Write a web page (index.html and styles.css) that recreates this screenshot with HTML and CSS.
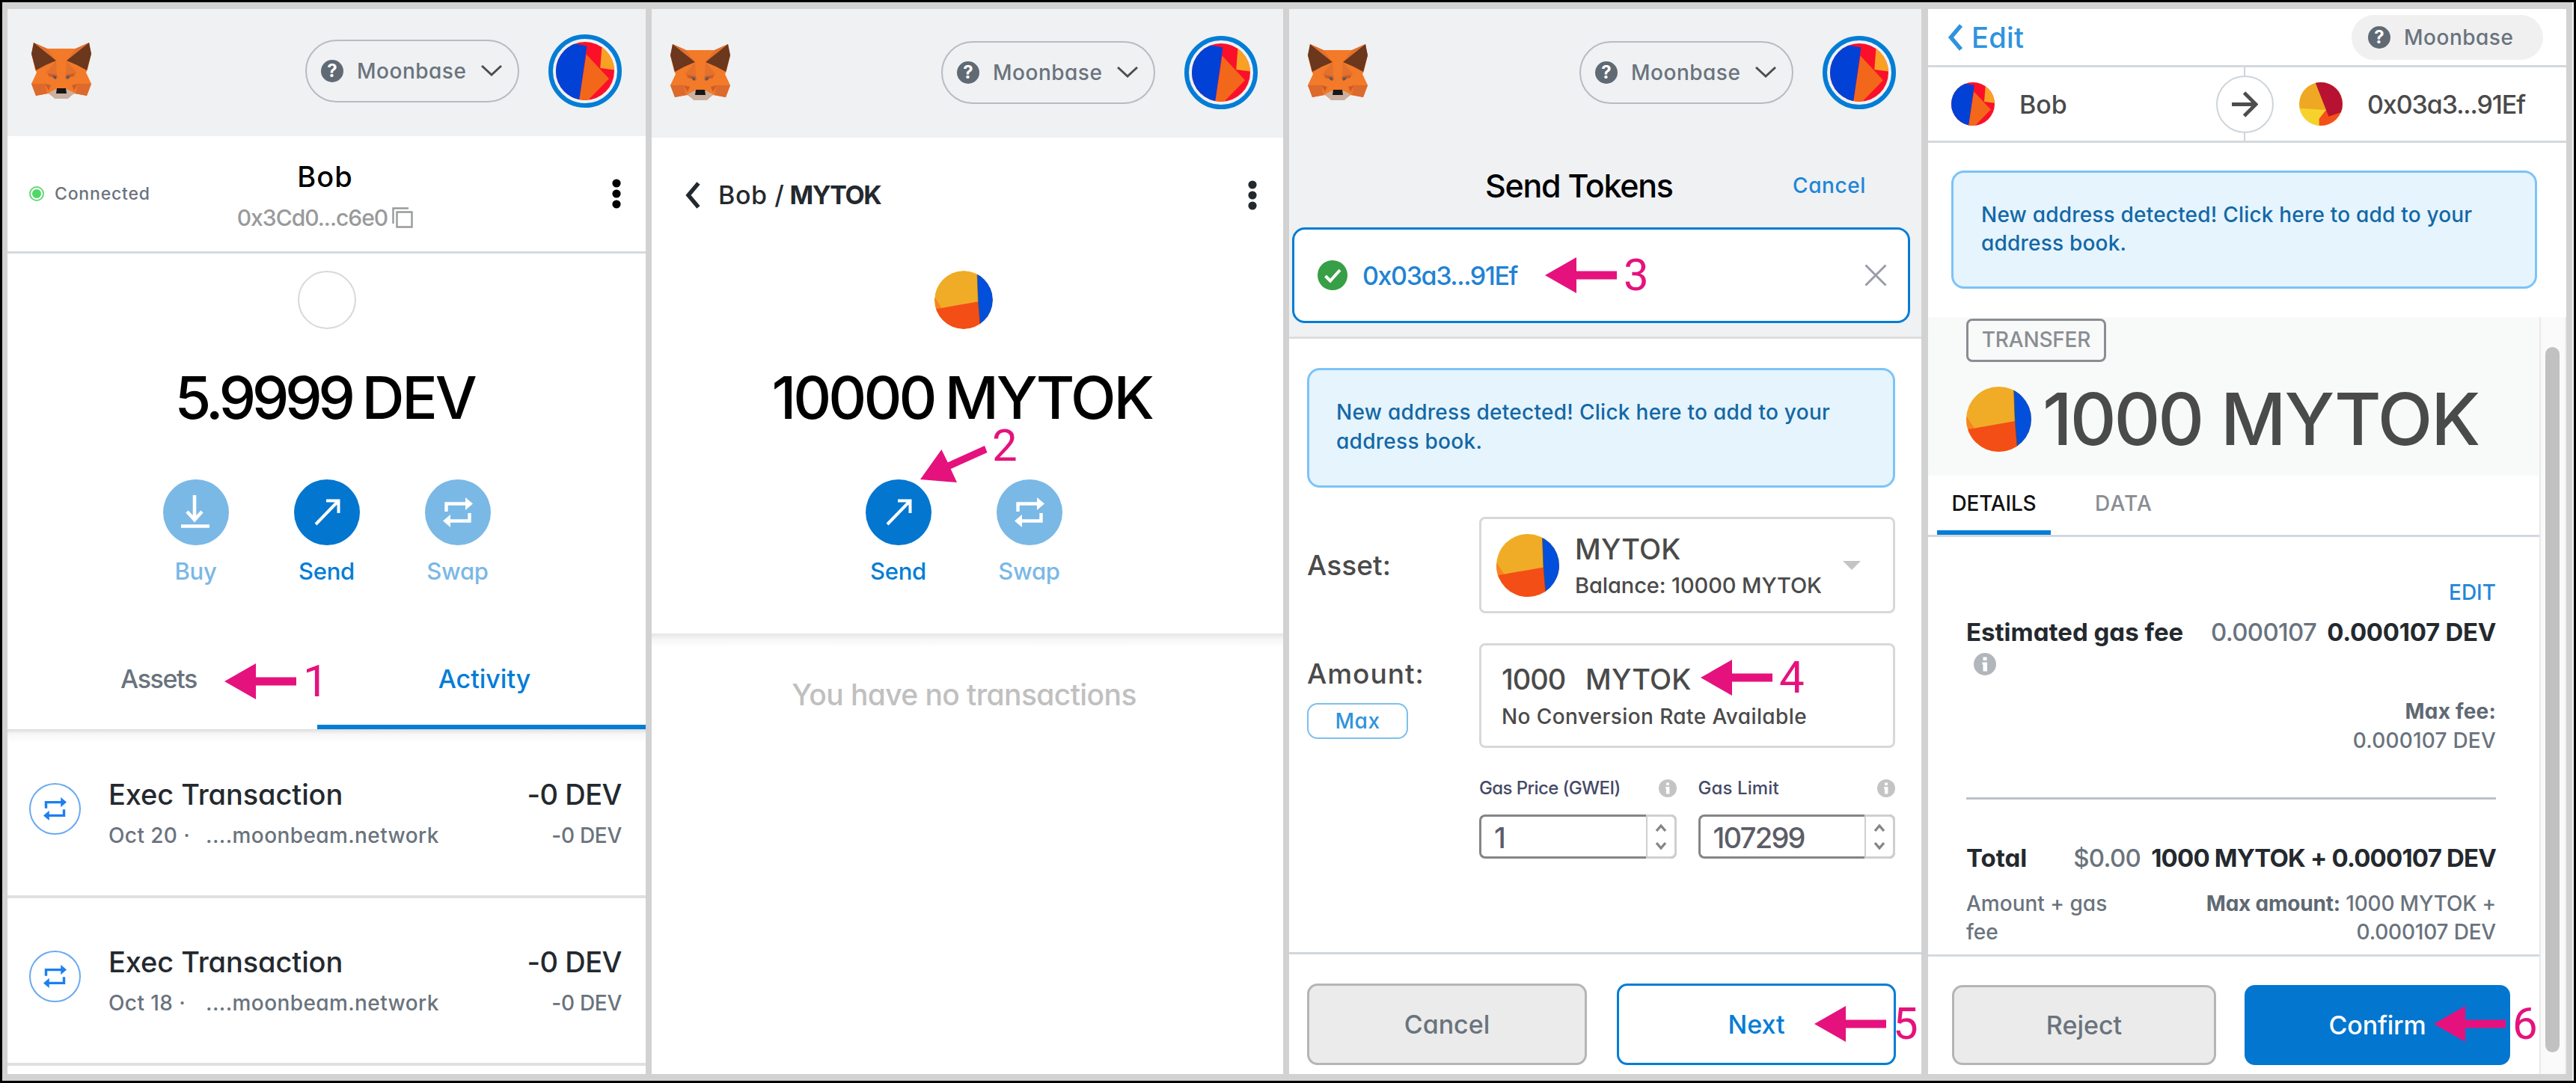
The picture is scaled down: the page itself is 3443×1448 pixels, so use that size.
FILE: index.html
```html
<!DOCTYPE html>
<html lang="en">
<head>
<meta charset="utf-8">
<title>Send tokens walkthrough</title>
<link rel="stylesheet" href="styles.css">
</head>
<body>
<svg class="defs" aria-hidden="true">
  <symbol id="fox" viewBox="0 0 80 76">
    <path fill="#f27a28" d="M3 0l18 8h38l18-8 3 15-5 21-2 4 7 15-6 16-17-3-8 6H31l-8-6-17 3-6-16 7-15-2-4-5-21z"/>
    <path fill="#e2702e" d="M33 24L19 41l15 2zM47 24l14 17-15 2zM3 0l18 8 11 15zM77 0L59 8 48 23z"/>
    <path fill="#dc6a2c" d="M0 55h18l3 13-15 3zM80 55H62l-3 13 15 3z"/>
    <path fill="#cd5c2b" d="M18 55l8 2-3 7zM62 55l-8 2 3 7zM22 41l12 2 1 5-12-3zM58 41l-12 2-1 5 12-3z"/>
    <path fill="#575a5e" d="M28 44l5 1v4l-3-1zM52 44l-5 1v4l3-1z"/>
    <path fill="#6b371d" d="M3 0l30 24-14 6-13 7-6-22zM77 0L47 24l14 6 13 7 6-22z"/>
    <path fill="#cbb0a0" d="M23 67l10-5h14l10 5-8 8H31z"/>
    <path fill="#161616" d="M34 61h12l1 7H33z"/>
  </symbol>
  <symbol id="face-bob" viewBox="0 0 100 100">
    <g clip-path="url(#round)">
      <path fill="#fb1029" d="M0 0h100v100H0z"/>
      <path fill="#0141d6" d="M0 0l25 2 28 5-13 93H0z"/>
      <path fill="#f3671b" d="M52 21l39 42-36 37H40z"/>
      <path fill="#f9a124" d="M79 5h21v43l-24-3z"/>
    </g>
  </symbol>
  <symbol id="face-token" viewBox="0 0 100 100">
    <g clip-path="url(#round)">
      <path fill="#f0ac26" d="M0 0h100v100H0z"/>
      <path fill="#f7851f" d="M0 45l12 18-12 10z"/>
      <path fill="#f44e17" d="M0 66l75-13 6 47H0z"/>
      <path fill="#024fdb" stroke="#5a4a3a" stroke-width=".8" d="M73 0l2 53 4 47h22V0z"/>
    </g>
  </symbol>
  <symbol id="face-recipient" viewBox="0 0 100 100">
    <g clip-path="url(#round)">
      <path fill="#efa823" d="M0 0h100v100H0z"/>
      <path fill="#f5d32c" d="M0 60l62 4-14 20v16H0z"/>
      <path fill="#f4501a" d="M62 64l-16 20v16h54V60z"/>
      <path fill="#b81232" d="M37 0h63v68l-32 11z"/>
    </g>
  </symbol>
  <clipPath id="round"><circle cx="50" cy="50" r="50"/></clipPath>
  <symbol id="copy" viewBox="0 0 28 28"><path fill="none" stroke="#989a9b" stroke-width="2.4" d="M1.5 22V1.5H22M6.500 6.500H26.500V26.500H6.500z"/></symbol>
  <symbol id="chevron-down" viewBox="0 0 28 18"><path fill="none" stroke="#4d4d4d" stroke-width="3" d="M1 2l13 12L27 2"/></symbol>
  <symbol id="chevron-left" viewBox="0 0 20 36"><path fill="none" stroke="currentColor" stroke-width="5.500" d="M17.500 2L4 18l13.500 16"/></symbol>
  <symbol id="kebab" viewBox="0 0 12 40"><circle cx="6" cy="6" r="5.600"/><circle cx="6" cy="20" r="5.600"/><circle cx="6" cy="34" r="5.600"/></symbol>
  <symbol id="download" viewBox="0 0 44 48"><path fill="none" stroke="#fff" stroke-width="4.600" d="M20 1v32M10 23l10 11 10-11M2 42.500h38"/></symbol>
  <symbol id="send" viewBox="0 0 40 40"><path fill="none" stroke="#fff" stroke-width="4" d="M5 36L35 5M19 4.500h16.500V21"/></symbol>
  <symbol id="swap" viewBox="0 0 40 40"><path fill="none" stroke="currentColor" stroke-width="4.400" d="M4.500 19V8.500H31M35.500 21v10.500H9"/><path fill="currentColor" d="M30 0l10 8.500-10 8.500zM10 23L0 31.500 10 40z"/></symbol>
  <symbol id="info" viewBox="0 0 30 30"><circle cx="15" cy="15" r="15" fill="currentColor"/><path fill="#fff" d="M12.500 5.500h5v4.500h-5zM11.500 12.500h6.500v12h-5.500v-9h-1z"/></symbol>
  <symbol id="arrow" viewBox="0 0 96 48"><path fill="#e5127d" d="M0 24L42 0v18.500h54v11H42V48z"/></symbol>
  <symbol id="stepper" viewBox="0 0 16 36"><path fill="none" stroke="#858585" stroke-width="3.400" d="M2 10l6-7 6 7M2 26l6 7 6-7"/></symbol>
</svg>

<main class="board">

  <section class="panel account">
    <header class="topbar">
      <svg class="fox"><use href="#fox"/></svg>
      <div class="network"><span class="help">?</span><span class="network-name">Moonbase</span><svg class="network-caret"><use href="#chevron-down"/></svg></div>
      <div class="avatar-ring"><svg><use href="#face-bob"/></svg></div>
    </header>
    <div class="identity">
      <div class="connected"><i class="status-dot"></i><span>Connected</span></div>
      <div class="who">
        <div class="who-name">Bob</div>
        <div class="who-address"><span>0x3Cd0...c6e0</span><svg><use href="#copy"/></svg></div>
      </div>
      <svg class="kebab"><use href="#kebab"/></svg>
    </div>
    <div class="overview">
      <div class="coin-blank"></div>
      <div class="balance"><span class="digits-native">5.9999</span><span class="unit-dev">DEV</span></div>
      <div class="actions">
        <div class="action dim"><span class="action-disc"><svg class="glyph-buy"><use href="#download"/></svg></span>Buy</div>
        <div class="action"><span class="action-disc"><svg class="glyph-send"><use href="#send"/></svg></span>Send</div>
        <div class="action dim"><span class="action-disc"><svg class="glyph-swap"><use href="#swap"/></svg></span>Swap</div>
      </div>
    </div>
    <nav class="tabs">
      <span class="tab tab-assets">Assets</span>
      <span class="tab tab-activity">Activity</span>
    </nav>
    <div class="history">
      <article class="tx">
        <span class="tx-icon"><svg><use href="#swap"/></svg></span>
        <div class="tx-main"><div class="tx-title">Exec Transaction</div><div class="tx-sub"><span class="tx-date">Oct 20 ·</span><span>....moonbeam.network</span></div></div>
        <div class="tx-amount"><div class="tx-value">-0 DEV</div><div class="tx-fiat">-0 DEV</div></div>
      </article>
      <article class="tx">
        <span class="tx-icon"><svg><use href="#swap"/></svg></span>
        <div class="tx-main"><div class="tx-title">Exec Transaction</div><div class="tx-sub"><span class="tx-date">Oct 18 ·</span><span>....moonbeam.network</span></div></div>
        <div class="tx-amount"><div class="tx-value">-0 DEV</div><div class="tx-fiat">-0 DEV</div></div>
      </article>
    </div>
    <div class="callout step-1"><svg><use href="#arrow"/></svg>1</div>
  </section>

  <section class="panel token">
    <header class="topbar">
      <svg class="fox"><use href="#fox"/></svg>
      <div class="network"><span class="help">?</span><span class="network-name">Moonbase</span><svg class="network-caret"><use href="#chevron-down"/></svg></div>
      <div class="avatar-ring"><svg><use href="#face-bob"/></svg></div>
    </header>
    <div class="crumbs">
      <svg class="crumb-back"><use href="#chevron-left"/></svg>
      <span class="crumb-account">Bob /</span><b class="crumb-token">MYTOK</b>
      <svg class="kebab"><use href="#kebab"/></svg>
    </div>
    <div class="overview">
      <svg class="coin"><use href="#face-token"/></svg>
      <div class="balance"><span class="digits-token">10000</span><span class="unit-token">MYTOK</span></div>
      <div class="actions">
        <div class="action"><span class="action-disc"><svg class="glyph-send"><use href="#send"/></svg></span>Send</div>
        <div class="action dim"><span class="action-disc"><svg class="glyph-swap"><use href="#swap"/></svg></span>Swap</div>
      </div>
    </div>
    <div class="empty">You have no transactions</div>
    <svg class="step-2-arrow" viewBox="0 0 90 50"><path fill="#e5127d" d="M0 45L28.400 5l8.400 17.300L86 0l3.500 9-48.800 22 8.300 18z"/></svg>
    <div class="callout step-2">2</div>
  </section>

  <section class="panel send">
    <div class="send-head">
      <header class="topbar">
        <svg class="fox"><use href="#fox"/></svg>
        <div class="network"><span class="help">?</span><span class="network-name">Moonbase</span><svg class="network-caret"><use href="#chevron-down"/></svg></div>
        <div class="avatar-ring"><svg><use href="#face-bob"/></svg></div>
      </header>
      <div class="send-title"><h1>Send Tokens</h1><a>Cancel</a></div>
      <div class="recipient">
        <svg class="check" viewBox="0 0 40 40"><circle cx="20" cy="20" r="20" fill="#379f46"/><path fill="none" stroke="#fff" stroke-width="4" d="M10.500 21l6.500 6.500L30 13"/></svg>
        <span class="recipient-address">0x03a3...91Ef</span>
        <svg class="clear" viewBox="0 0 30 30"><path stroke="#9a9ca8" stroke-width="3" d="M1.500 1.500l27 27M28.500 1.500l-27 27"/></svg>
      </div>
    </div>
    <p class="notice">New address detected! Click here to add to your<br>address book.</p>
    <div class="form">
      <label class="form-label label-asset">Asset:</label>
      <div class="asset-box">
        <svg class="asset-coin"><use href="#face-token"/></svg>
        <div><div class="asset-name">MYTOK</div><div class="asset-balance">Balance: 10000 MYTOK</div></div>
        <i class="dropdown"></i>
      </div>
      <div class="amount-side"><label class="form-label label-amount">Amount:</label><button class="max">Max</button></div>
      <div class="amount-box">
        <div class="amount-line"><span class="amount-digits">1000</span><span>MYTOK</span></div>
        <div class="amount-note">No Conversion Rate Available</div>
      </div>
      <div class="gas">
        <div class="gas-field">
          <div class="gas-label"><span class="gas-price">Gas Price (GWEI)</span><svg><use href="#info"/></svg></div>
          <div class="gas-input"><span class="gas-value">1</span><span class="gas-stepper"><svg><use href="#stepper"/></svg></span></div>
        </div>
        <div class="gas-field">
          <div class="gas-label"><span class="gas-limit">Gas Limit</span><svg><use href="#info"/></svg></div>
          <div class="gas-input"><span class="gas-value">107299</span><span class="gas-stepper"><svg><use href="#stepper"/></svg></span></div>
        </div>
      </div>
    </div>
    <footer class="send-foot"><button class="btn btn-grey">Cancel</button><button class="btn btn-outline">Next</button></footer>
    <div class="callout step-3"><svg><use href="#arrow"/></svg>3</div>
    <div class="callout step-4"><svg><use href="#arrow"/></svg>4</div>
    <div class="callout step-5"><svg><use href="#arrow"/></svg>5</div>
  </section>

  <section class="panel confirm">
    <div class="edit-row">
      <a class="edit-link"><svg><use href="#chevron-left"/></svg>Edit</a>
      <div class="network-flat"><span class="help">?</span><span class="network-name">Moonbase</span></div>
    </div>
    <div class="parties">
      <div class="party from"><svg class="party-face"><use href="#face-bob"/></svg><span class="party-bob">Bob</span></div>
      <div class="party to"><svg class="party-face"><use href="#face-recipient"/></svg><span class="party-address">0x03a3...91Ef</span></div>
      <span class="party-arrow"><svg viewBox="0 0 36 36"><path fill="none" stroke="#4d4d4d" stroke-width="5" d="M0 18h32M17 2l16 16-16 16"/></svg></span>
    </div>
    <p class="notice">New address detected! Click here to add to your<br>address book.</p>
    <div class="scroller">
      <div class="scroll-main">
        <div class="hero">
          <span class="badge">TRANSFER</span>
          <div class="hero-amount"><svg><use href="#face-token"/></svg><span class="hero-digits">1000</span><span class="hero-unit">MYTOK</span></div>
        </div>
        <nav class="detail-tabs"><span class="detail-tab current">DETAILS</span><span class="detail-tab">DATA</span></nav>
        <div class="details">
          <div class="details-edit">EDIT</div>
          <div class="line"><b class="line-name">Estimated gas fee</b><span class="line-value"><span class="faint">0.000107</span><b>0.000107 DEV</b></span></div>
          <svg class="details-info"><use href="#info"/></svg>
          <div class="max-fee"><b>Max fee:</b><br>0.000107 DEV</div>
          <hr>
          <div class="line total"><b class="line-name">Total</b><span class="line-value"><span class="faint">$0.00</span><b class="total-sum">1000 MYTOK + 0.000107 DEV</b></span></div>
          <div class="notes"><span>Amount + gas<br>fee</span><span class="notes-right"><b>Max amount:</b> 1000 MYTOK +<br>0.000107 DEV</span></div>
        </div>
        <footer class="confirm-foot"><button class="btn btn-grey">Reject</button><button class="btn btn-solid">Confirm</button></footer>
      </div>
      <div class="scrollbar"><i class="thumb"></i></div>
    </div>
    <div class="callout step-6"><svg><use href="#arrow"/></svg>6</div>
  </section>

</main>
</body>
</html>
```
FILE: styles.css
```css
* { box-sizing: border-box; }
body {
  margin: 0;
  width: 3443px;
  height: 1448px;
  padding: 3px;
  background: #000;
  overflow: hidden;
  font-family: Inter, "Liberation Sans", sans-serif;
  font-weight: 450;
  font-feature-settings: "cv11";
  color: #24292e;
}
svg { display: block; flex: none; }
.defs { position: absolute; width: 0; height: 0; }
h1, p { margin: 0; font-weight: 500; }
button { font: inherit; padding: 0; }

.board {
  height: 1442px;
  width: 3437px;
  padding: 9px 0 0 7px;
  background: #d2d2d2;
  border-right: 2px solid #f4f4f4;
  display: grid;
  grid-template-columns: 853px 844px 846px 853px;
  grid-template-rows: 1424px;
  column-gap: 8px;
}
.panel { position: relative; display: flex; flex-direction: column; background: #fff; }
.send { width: 845px; }

/* Top bar */
.topbar {
  flex: none;
  height: 172px;
  padding: 0 34px 3px 25px;
  display: flex;
  align-items: center;
  background: #eff1f3;
}
.account .topbar { height: 170px; padding: 0 32px 5px; }
.fox { width: 80px; height: 76px; }
.network {
  width: 286px;
  height: 84px;
  margin-left: auto;
  margin-right: 39px;
  padding-left: 19px;
  border: 2px solid #b6bcc2;
  border-radius: 42px;
  display: flex;
  align-items: center;
}
.help {
  width: 30px;
  height: 30px;
  margin-right: 18px;
  border-radius: 50%;
  background: #606a74;
  color: #fff;
  font-size: 24px;
  font-weight: 700;
  line-height: 30px;
  text-align: center;
}
.network-name { font-size: 28px; font-weight: 500; letter-spacing: .5px; color: #6a737d; line-height: 40px; }
.network-caret { width: 28px; height: 18px; margin-left: 20px; }
.avatar-ring {
  width: 98px;
  height: 98px;
  border: 6px solid #037dd6;
  border-radius: 50%;
  display: grid;
  place-items: center;
}
.avatar-ring svg { width: 78px; height: 78px; }
.kebab { width: 12px; height: 40px; }

/* Account panel */
.identity {
  height: 157px;
  padding: 0 33px 0 29px;
  border-bottom: 3px solid #d6dadf;
  display: grid;
  grid-template-columns: 1fr auto 1fr;
  align-items: center;
}
.identity .kebab { justify-self: end; fill: #000; }
.connected { display: flex; align-items: center; gap: 14px; font-size: 23px; font-weight: 500; letter-spacing: .8px; color: #6a737d; }
.status-dot { width: 20px; height: 20px; border: 2px solid #6bd47c; border-radius: 50%; padding: 2px; background: #4cd964 content-box; background-clip: content-box; }
.who { padding-top: 9px; line-height: 55px; text-align: center; }
.who-name { font-size: 38px; font-weight: 500; letter-spacing: 1px; color: #000; }
.who-address { display: flex; align-items: center; gap: 6px; font-size: 30px; letter-spacing: -1px; color: #989a9b; }
.who-address svg { width: 28px; height: 28px; }

.overview { display: flex; flex-direction: column; align-items: center; }
.account .overview { padding-top: 23px; }
.coin-blank, .coin { width: 78px; height: 78px; border-radius: 50%; }
.coin-blank { border: 2px solid #d8d8d8; }
.balance { margin: 41px 5px 0 0; display: flex; gap: 14px; font-size: 79px; font-weight: 500; line-height: 100px; color: #000; }
.digits-native { letter-spacing: -5.500px; }
.unit-dev { letter-spacing: -3.200px; }
.digits-token { letter-spacing: -3.900px; }
.unit-token { letter-spacing: -3.100px; }
.actions { margin-top: 60px; display: flex; gap: 87px; }
.action {
  width: 88px;
  display: flex;
  flex-direction: column;
  align-items: center;
  gap: 15px;
  font-size: 31px;
  font-weight: 500;
  letter-spacing: -.3px;
  line-height: 40px;
  color: #037dd6;
}
.action-disc { width: 88px; height: 88px; border-radius: 50%; background: #0376d0; display: grid; place-items: center; }
.dim { color: #7ab8e6; }
.dim .action-disc { background: #7ab8e6; color: #fff; }
.glyph-buy { width: 44px; height: 48px; }
.glyph-send { width: 40px; height: 40px; }
.glyph-swap { width: 40px; height: 40px; }

.tabs {
  margin-top: 59px;
  height: 132px;
  display: grid;
  grid-template-columns: 414px 439px;
  font-size: 34px;
  text-align: center;
  line-height: 122px;
}
.tab { font-weight: 500; padding-top: 4px; }
.tab-assets { padding-right: 10px; color: #6a737d; letter-spacing: -1.400px; }
.tab-activity { padding-left: 8px; color: #037dd6; border-bottom: 6px solid #037dd6; }
.history { padding-top: 2px; background: linear-gradient(#dcdcdc, #f6f6f6 6px, #fff 18px); }
.tx {
  height: 224px;
  padding: 60px 32px 0 29px;
  border-bottom: 4px solid #e0e0e0;
  display: flex;
}
.tx-icon { width: 69px; height: 69px; margin: 10px 37px 0 0; border: 2px solid #6aa9f2; border-radius: 50%; color: #1c7ff0; display: grid; place-items: center; }
.tx-icon svg { width: 31px; height: 31px; }
.tx-title, .tx-value { font-size: 38px; line-height: 50px; letter-spacing: -.1px; }
.tx-sub, .tx-fiat { margin-top: 10px; font-size: 28px; line-height: 40px; color: #6a737d; }
.tx-sub { display: flex; letter-spacing: .4px; }
.tx-date { width: 130px; }
.tx-amount { margin-left: auto; text-align: right; }
.tx-value { letter-spacing: -.5px; }
.tx-fiat { letter-spacing: -.3px; }

/* Token panel */
.crumbs { height: 153px; padding: 0 35px 0 45px; display: flex; align-items: center; font-size: 34px; }
.crumb-back { width: 20px; height: 36px; margin-right: 24px; }
.crumb-account { letter-spacing: .6px; margin-right: 7px; }
.crumb-token { letter-spacing: -1.500px; }
.crumbs .kebab { margin-left: auto; fill: #24292e; }
.token .overview { padding: 25px 10px 63px 0; }
.empty {
  flex: 1;
  padding: 57px 9px 0 0;
  background: linear-gradient(#e6e6e6, #f6f6f6 8px, #fff 18px);
  font-size: 39px;
  line-height: 50px;
  letter-spacing: -.6px;
  text-align: center;
  color: #c0c0c0;
}

/* Send panel */
.send-head { flex: none; height: 441px; background: #eff1f3; border-bottom: 3px solid #dcdee0; }
.send-title { height: 120px; padding: 7px 74px 0 262px; display: flex; align-items: center; justify-content: space-between; }
.send-title h1 { font-size: 43px; letter-spacing: -1.300px; color: #000; }
.send-title a { font-size: 28px; font-weight: 500; letter-spacing: .6px; color: #1e86d6; }
.recipient {
  height: 128px;
  margin: 0 15px 0 4px;
  padding: 0 28px 0 31px;
  border: 3px solid #037dd6;
  border-radius: 17px;
  background: #fff;
  display: flex;
  align-items: center;
}
.check { width: 40px; height: 40px; }
.recipient-address { margin-left: 20px; font-size: 34px; font-weight: 500; letter-spacing: -1.400px; color: #1f83d3; }
.clear { width: 30px; height: 30px; margin-left: auto; }
.notice {
  flex: none;
  height: 160px;
  margin: 39px 35px 0 24px;
  padding: 37px 0 0 36px;
  border: 3px solid #7cc3f8;
  border-radius: 17px;
  background: #e6f4fd;
  font-size: 28px;
  line-height: 38.600px;
  letter-spacing: .28px;
  white-space: nowrap;
  color: #1368a6;
}
.form {
  margin: 39px 35px 0 24px;
  display: grid;
  grid-template-columns: 230px 1fr;
  row-gap: 40px;
}
.form-label { font-size: 37px; line-height: 46px; color: #4a4a4a; }
.label-asset { align-self: center; letter-spacing: .1px; }
.label-amount { letter-spacing: 1px; }
.asset-box, .amount-box { border: 3px solid #d8d8d8; border-radius: 8px; color: #4a4a4a; }
.asset-box { height: 129px; padding: 0 43px 0 20px; display: flex; align-items: center; }
.asset-coin { width: 84px; height: 84px; margin-right: 21px; }
.asset-name { font-size: 38px; line-height: 54px; letter-spacing: .2px; }
.asset-balance { font-size: 29px; line-height: 44px; letter-spacing: -.1px; }
.dropdown { margin-left: auto; border: 12px solid transparent; border-top-color: #c4c4c4; border-bottom: 0; }
.amount-side { padding-top: 18px; display: flex; flex-direction: column; align-items: flex-start; }
.max {
  width: 135px;
  height: 48px;
  margin-top: 16px;
  border: 2px solid #7cc0ee;
  border-radius: 14px;
  background: #fff;
  font-size: 28px;
  font-weight: 500;
  letter-spacing: .5px;
  color: #2f93dc;
}
.amount-box { height: 140px; padding: 20px 0 0 27px; }
.amount-line { display: flex; font-size: 38px; line-height: 50px; letter-spacing: .2px; }
.amount-digits { width: 112px; letter-spacing: -1px; }
.amount-note { margin-top: 3px; font-size: 28px; line-height: 44px; letter-spacing: .4px; }
.gas { grid-column: 2; display: grid; grid-template-columns: 1fr 1fr; column-gap: 29px; }
.gas-label { height: 27px; display: flex; align-items: center; justify-content: space-between; font-size: 24px; color: #454a66; }
.gas-label svg { width: 24px; height: 24px; color: #c4c4c4; }
.gas-price { letter-spacing: -.6px; }
.gas-limit { letter-spacing: .1px; }
.gas-input {
  height: 59px;
  margin-top: 22px;
  border: 3px solid #858585;
  border-right: 0;
  border-radius: 8px;
  display: flex;
  justify-content: space-between;
  font-size: 38px;
  line-height: 57px;
  letter-spacing: -1.700px;
  color: #5b5d67;
}
.gas-value { padding-left: 17px; }
.gas-stepper { width: 41px; margin: -3px 0; border: 3px solid #cfcfcf; border-left-width: 2px; border-radius: 0 8px 8px 0; background: #fff; display: grid; place-items: center; }
.gas-stepper svg { width: 16px; height: 36px; }

.btn { border-radius: 14px; font-size: 34px; font-weight: 500; line-height: 1; }
.btn-grey { border: 3px solid #b5b5b5; background: #ebebeb; color: #6a737d; }
.btn-outline { border: 3px solid #037dd6; background: #fff; color: #037dd6; }
.btn-solid { border: 0; background: #0376d0; color: #fff; letter-spacing: -.2px; }
.send-foot {
  flex: none;
  height: 163px;
  margin-top: auto;
  padding: 39px 34px 13px 24px;
  border-top: 3px solid #d0d6db;
  display: grid;
  grid-template-columns: 374px 373px;
  grid-template-rows: 109px;
  justify-content: space-between;
}

/* Confirm panel */
.edit-row { height: 78px; padding: 0 31px 0 26px; border-bottom: 3px solid #d3d9de; display: flex; align-items: center; justify-content: space-between; }
.edit-link { display: flex; align-items: center; gap: 11px; font-size: 38px; letter-spacing: .3px; color: #2f93de; }
.edit-link svg { width: 21px; height: 36px; }
.network-flat { width: 256px; height: 60px; padding-left: 22px; border-radius: 30px; background: #f0f0f0; display: flex; align-items: center; }
.parties { position: relative; height: 101px; border-bottom: 3px solid #d3d9de; display: grid; grid-template-columns: 422px 1fr; }
.party { padding-left: 31px; display: flex; align-items: center; gap: 33px; font-size: 34px; color: #4a4a4a; }
.party.to { padding-left: 72px; border-left: 2px solid #cdd5da; }
.party-face { width: 58px; height: 58px; }
.party-bob { font-weight: 500; }
.party-address { letter-spacing: -1.100px; }
.party-arrow { position: absolute; left: 385px; top: 11px; width: 77px; height: 77px; border: 2px solid #cdd5da; border-radius: 50%; background: #fff; display: grid; place-items: center; }
.party-arrow svg { width: 35px; height: 35px; }
.confirm .notice { height: 158px; margin: 37px 39px 38px 31px; padding: 37px 0 0 37px; line-height: 38px; letter-spacing: .2px; }
.scroller { flex: 1; display: flex; min-height: 0; }
.scroll-main { width: 817px; display: flex; flex-direction: column; }
.scrollbar { width: 36px; padding: 40px 7px 0 6px; border-left: 2px solid #e9e9e9; border-right: 2px solid #efefef; background: #fafafa; }
.thumb { display: block; height: 943px; border-radius: 10px; background: #c1c1c1; }
.hero { height: 212px; padding: 2px 0 0 51px; background: #f8faf9; }
.badge {
  display: block;
  width: 187px;
  height: 58px;
  border: 3px solid #8a8d92;
  border-radius: 8px;
  font-size: 28px;
  line-height: 51px;
  letter-spacing: -.2px;
  text-align: center;
  color: #8a8d92;
}
.hero-amount { margin-top: 32px; display: flex; align-items: center; height: 88px; font-size: 96px; font-weight: 500; line-height: 84px; color: #4a4a4a; }
.hero-amount svg { width: 87px; height: 87px; margin-right: 15px; }
.hero-digits { letter-spacing: -3.200px; width: 238px; }
.hero-unit { letter-spacing: -2px; }
.detail-tabs { height: 82px; padding-left: 12px; border-bottom: 3px solid #d2d8dd; display: flex; gap: 59px; font-size: 28px; line-height: 75px; color: #8a8d92; }
.detail-tab { letter-spacing: 1.200px; }
.current { width: 152px; border-bottom: 6px solid #037dd6; font-weight: 500; letter-spacing: -.2px; text-align: center; color: #111; }
.details { padding: 54px 58px 0 51px; font-size: 28px; color: #6a737d; }
.details-edit { line-height: 40px; text-align: right; color: #2386d8; }
.line { margin-top: 10px; display: flex; justify-content: space-between; font-size: 33px; line-height: 46px; }
.line b { color: #24292e; }
.line-value { display: flex; gap: 14px; }
.faint { letter-spacing: -.7px; }
.line-value b { letter-spacing: -.3px; }
.details-info { width: 30px; height: 30px; margin: 5px 0 0 10px; color: #b0b6bb; }
.max-fee { margin-top: 29px; line-height: 38.500px; letter-spacing: .2px; text-align: right; }
.max-fee b, .notes b { color: #5f6973; }
.details hr { height: 3px; margin: 57px 0 0; border: 0; background: #bcc1c6; }
.total { margin-top: 55px; }
.line-value .total-sum { letter-spacing: -.83px; }
.notes { margin-top: 20px; display: flex; justify-content: space-between; line-height: 37.500px; }
.notes-right { text-align: right; letter-spacing: -.2px; }
.confirm-foot {
  flex: none;
  height: 160px;
  margin-top: auto;
  padding: 38px 39px 0 32px;
  border-top: 3px solid #d2dae2;
  display: grid;
  grid-template-columns: 353px 355px;
  grid-template-rows: 107px;
  justify-content: space-between;
}

/* Step callouts laid over the panels */
.callout { position: absolute; display: flex; align-items: center; gap: 9px; font: 400 60px/60px Roboto, sans-serif; color: #e5127d; white-space: nowrap; }
.callout svg { width: 96px; height: 48px; }
.step-1 { left: 290px; top: 869px; }
.step-2 { left: 455px; top: 562px; line-height: 44px; }
.step-2-arrow { position: absolute; left: 359px; top: 584px; width: 90px; height: 50px; }
.step-3 { left: 342px; top: 326px; }
.step-4 { left: 550px; top: 864px; }
.step-5 { left: 702px; top: 1327px; }
.step-6 { left: 676px; top: 1327px; }
```
